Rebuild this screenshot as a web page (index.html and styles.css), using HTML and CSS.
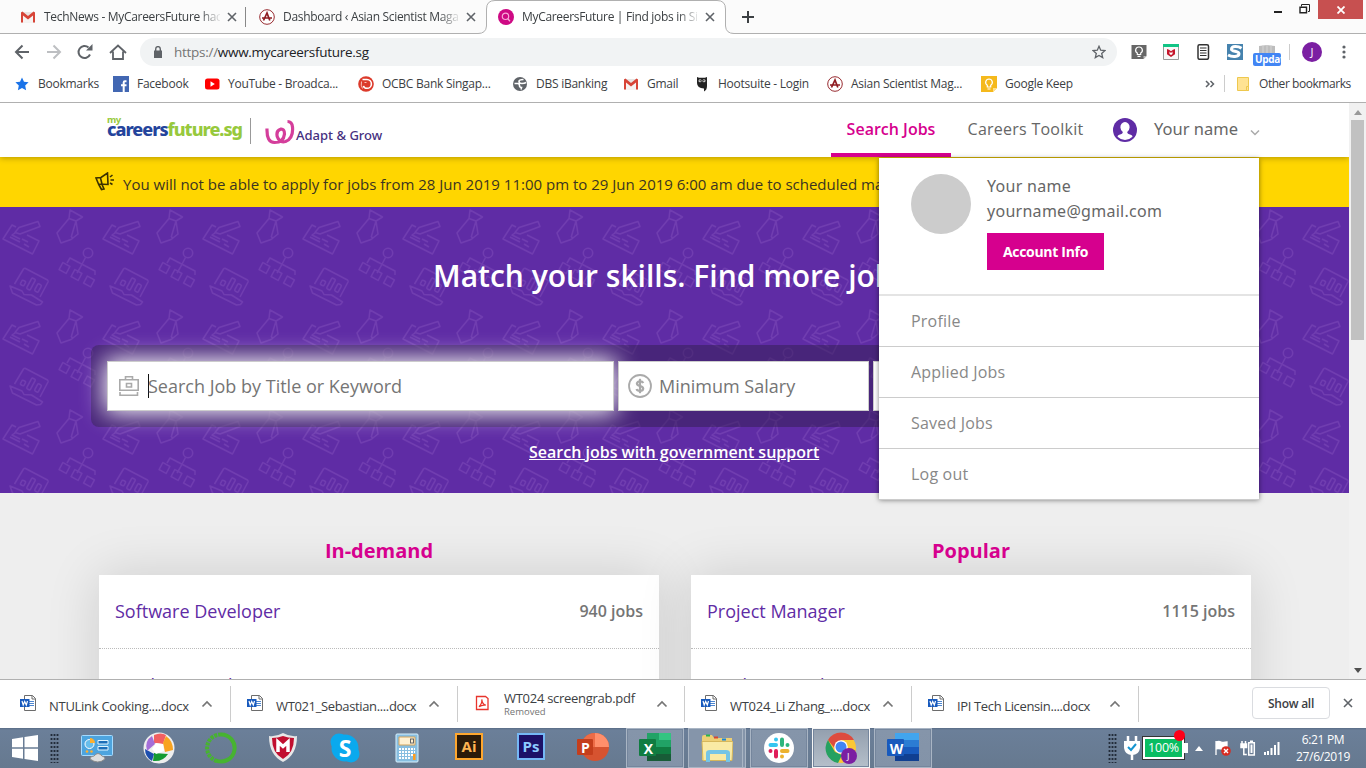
FILE: index.html
```html
<!DOCTYPE html>
<html lang="en">
<head>
<meta charset="utf-8">
<title>MyCareersFuture | Find jobs in Singapore</title>
<link rel="stylesheet" href="styles.css">
</head>
<body>
<svg class="defs" width="0" height="0" aria-hidden="true">
  <symbol id="gmail" viewBox="0 0 16 16"><path d="M1 3h14v10.500H1z" fill="#e8e4e2"/><path d="M3 5l5 4 5-4v8.500H3z" fill="#f6f3f2"/><path d="M1 3.400V13.500h2V6.500l5 4 5-4v7h2V3.400L13.600 2.500 8 7 2.400 2.500z" fill="#d74437"/></symbol>
  <symbol id="asian" viewBox="0 0 16 16"><circle cx="8" cy="8" r="7.300" fill="#fff" stroke="#982b30" stroke-width="1"/><path d="M4.500 11.500L8 4l2.800 7.500M3 9h10" fill="none" stroke="#8f1c22" stroke-width="1.700"/></symbol>
  <symbol id="x" viewBox="0 0 10 10"><path d="M1 1l8 8M9 1L1 9" stroke="#5f6368" stroke-width="1.600"/></symbol>
  <symbol id="up" viewBox="0 0 12 8"><path d="M1.500 6.500L6 2l4.500 4.500" fill="none" stroke="#757575" stroke-width="1.700"/></symbol>
  <symbol id="word" viewBox="0 0 16 16"><path d="M4.500.5h8l3 3v12h-11z" fill="#fff" stroke="#6c6c6c"/><path d="M12 .5v3.500h3.500" fill="none" stroke="#6c6c6c"/><path d="M9 6.500h5M9 8.500h5M9 10.500h5" stroke="#4d86d0"/><path d="M0 4h9.500v8H0z" fill="#185abd"/><path d="M2 6l1.200 4L4.700 6.500 6.300 10 7.500 6" fill="none" stroke="#fff" stroke-width="1.200"/></symbol>
</svg>

<div class="tabs">
  <div class="tab"><svg class="ico"><use href="#gmail"/></svg><span class="tab-name">TechNews - MyCareersFuture hackathon</span><svg class="close"><use href="#x"/></svg></div>
  <div class="tab second"><svg class="ico"><use href="#asian"/></svg><span class="tab-name">Dashboard ‹ Asian Scientist Magazine</span><svg class="close"><use href="#x"/></svg></div>
  <div class="tab active">
    <svg class="tab-shape" viewBox="0 0 256 34"><path d="M0 33.500Q8 33.500 8.500 26V9Q8.500.500 17 .500H239Q247.500.500 247.500 9V26Q248 33.500 256 33.500V34H0z" fill="#fff"/><path d="M0 33.500Q8 33.500 8.500 26V9Q8.500.500 17 .500H239Q247.500.500 247.500 9V26Q248 33.500 256 33.500" fill="none" stroke="#b0b0b0"/></svg>
    <svg class="ico" viewBox="0 0 16 16"><circle cx="8" cy="8" r="8" fill="#ce0a84"/><circle cx="7.500" cy="7.300" r="3.200" fill="none" stroke="#f9a8d8" stroke-width="1.200"/><path d="M9.800 9.800l2.200 2.400" stroke="#f9a8d8" stroke-width="1.300"/></svg>
    <span class="tab-name">MyCareersFuture | Find jobs in Singapore</span><svg class="close"><use href="#x"/></svg></div>
  <svg class="plus" viewBox="0 0 12 12"><path d="M6 0v12M0 6h12" stroke="#3c4043" stroke-width="2"/></svg>
  <div class="win">
    <svg class="min" viewBox="0 0 8 2"><path d="M0 0h8v2H0z" fill="#222"/></svg>
    <svg class="restore" viewBox="0 0 11 10"><path d="M2.500 2.500V.5h8v7H9" fill="none" stroke="#222"/><path d="M1 3.200h6.500v5.500H1z" fill="#fff" stroke="#222" stroke-width="1.400"/></svg>
    <span class="win-close"><svg viewBox="0 0 8 8"><path d="M.500.500l7 7M7.500.500l-7 7" stroke="#fff" stroke-width="1.800"/></svg></span>
  </div>
</div>

<div class="toolbar">
  <svg class="navs" viewBox="0 0 116 20" fill="none" stroke="#5f6368" stroke-width="2">
    <path d="M15 10H2M8.500 3.500L2 10l6.500 6.500"/><path d="M33 10h13M39.500 3.500L46 10l-6.500 6.500" stroke="#bdbfc2"/><path d="M76 12.500A6 6 0 1 1 74.500 5.500"/><path d="M78.500 2v6.500H72z" fill="#5f6368" stroke="none"/><path d="M96 11l8-7.500 8 7.500M99 9.500V17h10V9.500" stroke-width="1.800"/>
  </svg>
  <div class="omni">
    <svg class="lock" viewBox="0 0 8 12"><path d="M0 4.500h8V12H0z" fill="#5f6368"/><path d="M1.700 5V2.900a2.300 2.300 0 0 1 4.600 0V5" fill="none" stroke="#5f6368" stroke-width="1.400"/></svg>
    <span class="url"><i>https://</i>www.mycareersfuture.sg</span>
    <svg class="star" viewBox="0 0 14 14"><path d="M7 1.300l1.700 3.900 4.200.4-3.200 2.800 1 4.200L7 10.400l-3.700 2.200 1-4.200L1.100 5.600l4.200-.4z" fill="none" stroke="#5f6368" stroke-width="1.300"/></svg>
  </div>
  <div class="exts">
    <svg viewBox="0 0 16 16"><path d="M.500 1h15v11l-3 3H.500z" fill="#666"/><path d="M15.500 12h-3v3z" fill="#bbb"/><path d="M8 3a3.200 3.200 0 0 0-1.700 6v1.500h3.400V9A3.200 3.200 0 0 0 8 3zM6.500 12.300h3" fill="none" stroke="#fff" stroke-width="1.200"/></svg>
    <svg viewBox="0 0 16 16"><path d="M.500.500h15v15H.500z" fill="#f8f8f8" stroke="#999"/><path d="M0 0h16v3H0z" fill="#12c485"/><path d="M4 5l2 .8 2 1.400 2-1.400 2-.8v5.300L8 13l-4-2.700z" fill="#c5152b"/><path d="M6.500 7.500L8 9l1.500-1.500V10L8 11l-1.500-1z" fill="#fff"/></svg>
    <svg viewBox="0 0 16 16"><rect x="3" y=".8" width="10.500" height="14.500" rx="1.500" fill="#fff" stroke="#333" stroke-width="1.500"/><path d="M5 4h6.500M5 6.500h6.500M5 9h6.500M5 11.500h6.500" stroke="#333" stroke-width="1.200"/></svg>
    <svg viewBox="0 0 16 16"><path d="M0 0h16v16H0z" fill="#4683ae"/><path d="M14.500 4.300C11 2 4.500 1.800 4.500 5.200c0 2.600 7.500 1.600 7.500 4.600 0 3.400-7 3.500-11 1.200" fill="none" stroke="#fff" stroke-width="3"/></svg>
    <span class="upd"><svg viewBox="0 0 16 16"><path d="M0 2l8-1 8 1v9H0z" fill="#bdbdbd"/><path d="M4 1v9M8 1v9M12 1v9" stroke="#d5d5d5"/></svg><b>Updat</b></span>
  </div>
  <i class="bar"></i>
  <span class="user">J</span>
  <svg class="dots" viewBox="0 0 4 14" fill="#5f6368"><circle cx="2" cy="2" r="1.600"/><circle cx="2" cy="7" r="1.600"/><circle cx="2" cy="12" r="1.600"/></svg>
</div>

<div class="marks">
  <div class="mark"><svg viewBox="0 0 16 16"><path d="M8 1.500l2 4.300 4.600.5-3.400 3.200.9 4.800L8 12l-4.100 2.300.9-4.800L1.400 6.300 6 5.800z" fill="#1a73e8"/></svg>Bookmarks</div>
  <div class="mark"><svg viewBox="0 0 16 16"><path d="M0 0h16v16H0z" fill="#4267b2"/><path d="M13.500 5.200h-1.600q-1.200 0-1.200 1.200V16M8 9.300h5.500" fill="none" stroke="#fff" stroke-width="2"/></svg>Facebook</div>
  <div class="mark tight"><svg viewBox="0 0 16 16"><rect x="1" y="2.500" width="14.500" height="11" rx="2.500" fill="#f00"/><path d="M6.500 5.300v5.400L10.800 8z" fill="#fff"/></svg>YouTube - Broadca...</div>
  <div class="mark tight"><svg viewBox="0 0 16 16"><circle cx="8" cy="8" r="7.800" fill="#dc3a2b"/><path d="M4.500 3.500H9a4.300 4.300 0 0 1 0 8.800q-3 0-3.500-2.500" fill="none" stroke="#fff" stroke-width="1.600"/><path d="M6.500 6.500h2M3.500 5.500q-1 4 1 7" fill="none" stroke="#f7c4bd"/></svg>OCBC Bank Singap...</div>
  <div class="mark"><svg viewBox="0 0 16 16"><circle cx="8" cy="8" r="7" fill="#5f6368"/><path d="M11.500 3.500Q7 3.500 7 5.500T10 7.500q2.500 0 4-1M2.500 7.500h3q2 0 2 2t2 2l-.5 2" fill="none" stroke="#fff" stroke-width="1.600"/></svg>DBS iBanking</div>
  <div class="mark"><svg><use href="#gmail"/></svg>Gmail</div>
  <div class="mark"><svg viewBox="0 0 16 16"><path d="M3 1l2 .700h6l2-.700v9q0 4-3 5.500v-3Q3 12 3 7z" fill="#222"/><circle cx="6" cy="4.700" r="1.500" fill="#ddd"/><circle cx="10" cy="4.700" r="1.500" fill="#ddd"/><circle cx="6.200" cy="4.700" r=".7" fill="#222"/><circle cx="9.800" cy="4.700" r=".7" fill="#222"/></svg>Hootsuite - Login</div>
  <div class="mark tight"><svg><use href="#asian"/></svg>Asian Scientist Mag...</div>
  <div class="mark tight"><svg viewBox="0 0 16 16"><path d="M0 0h16v12l-4 4H0z" fill="#f5b91c"/><path d="M16 12h-4v4z" fill="#ffe08a"/><path d="M8 3a3.400 3.400 0 0 0-1.700 6.300V11h3.400V9.300A3.400 3.400 0 0 0 8 3zM6.500 13h3" fill="none" stroke="#fff" stroke-width="1.200"/></svg>Google Keep</div>
  <svg class="more" viewBox="0 0 10 8"><path d="M1 1l3 3-3 3M5.500 1l3 3-3 3" fill="none" stroke="#5f6368" stroke-width="1.500"/></svg>
  <div class="mark others"><svg viewBox="0 0 16 16"><path d="M2.500 1.500h11v13h-11z" fill="#ffe393" stroke="#eec84e"/><path d="M11.500 14.500v-4h2v4z" fill="#ffe393" stroke="#eec84e"/></svg>Other bookmarks</div>
</div>

<div class="view">
<main class="site">
  <header class="head">
    <div class="brand"><span class="my">my</span><span class="cf"><b>careers</b>future.sg</span></div>
    <div class="adapt"><svg viewBox="0 0 30 26"><path d="M2 9.500Q1.500 23.500 9.500 23.500 18.500 23.500 19.500 15 19.500 9.500 15.500 10.200 11 11.500 12.200 17.500 14.500 24 20.500 22.500 28.500 19.500 27.500 8 27 2.500 22.500 2.500" fill="none" stroke="#d43e9b" stroke-width="3.200"/></svg><span>Adapt &amp; Grow</span></div>
    <nav class="nav">
      <a class="on">Search Jobs</a><a class="tool">Careers Toolkit</a>
      <svg class="face" viewBox="0 0 24 24"><circle cx="12" cy="12" r="12" fill="#5f2ca5"/><path d="M12 4a4.600 5 0 0 0-4.600 5.500Q7.600 12.500 9.800 14q0 2-3.500 2.700-1.700.5-1.800 2Q8 22 12 22t7.500-3.300q0-1.500-1.800-2-3.500-.7-3.500-2.700 2.200-1.500 2.400-4.500A4.600 5 0 0 0 12 4z" fill="#fff"/></svg>
      <span class="name">Your name</span>
      <svg class="down" viewBox="0 0 10 7"><path d="M1 1.500l4 4 4-4" fill="none" stroke="#aaa" stroke-width="1.500"/></svg>
    </nav>
    <aside class="menu">
      <div class="profile"><span class="pic"></span>
        <div><p>Your name</p><p>yourname@gmail.com</p><button>Account Info</button></div></div>
      <a>Profile</a><a>Applied Jobs</a><a>Saved Jobs</a><a>Log out</a>
    </aside>
  </header>
  <div class="notice"><svg viewBox="0 0 20 20" fill="none" stroke="#3b3200" stroke-width="1.600"><path d="M1 6l2.500 6 9.500.500L12.500 1 6 5.500zM3.500 12l3 5.500 2.500-.5-2-4.500M5.500 6l1.500 6M15 5l2.500-2M15.500 8h3.500M15 11l2.500 1.500"/></svg><span>You will not be able to apply for jobs from 28 Jun 2019 11:00 pm to 29 Jun 2019 6:00 am due to scheduled maintenance</span></div>
  <section class="hero">
    <svg class="pattern"><defs><pattern id="work" width="100" height="100" patternUnits="userSpaceOnUse"><g fill="none" stroke="#703db0" stroke-width="1.500" stroke-linejoin="round">
      <path d="M16 20l-4-2-9 14 29.500 15L39 34l-12-6M38 14.500l2 5L20 27l-5-1.500 4-5zM15 26l-3 2 8 4M10 30l10 5M22 32l6 3M24 37l5 3"/>
      <path d="M70 3l12.500 7L76 14l-7-2.500zM69 11.500L57 26l4 10 10-3.500 7-5.500-2-13-4.500 15M71 29l2 3"/>
      <circle cx="88" cy="46" r="4.700"/><path d="M85.500 50.500L80 61M67 56l3-5 25 13v4M80 61l-3 5"/>
      <rect x="-4" y="-4" width="8" height="8" transform="translate(64.500 61) rotate(28)"/><rect x="-4" y="-4" width="8" height="8" transform="translate(76.500 68) rotate(28)"/><rect x="-4" y="-4" width="8" height="8" transform="translate(89 74.500) rotate(28)"/>
      <path d="M14.500 77l9-15q1-1 2-.500L47.500 73q1 1 .5 2L40 90M10 79l12 5 2 3.500 7.500.5 11 7-2 2.500-4 .5-24-12z"/>
      <rect x="-2" y="-2.500" width="4" height="5" rx="1" transform="translate(23 76) rotate(28)"/><rect x="-2" y="-6" width="4" height="12" rx="1" transform="translate(31 77) rotate(28)"/><rect x="-2" y="-4" width="4" height="8" rx="1" transform="translate(38 81) rotate(28)"/>
    </g></pattern></defs><rect width="100%" height="100%" fill="url(#work)"/></svg>
    <h1>Match your skills. Find more jobs for you</h1>
    <div class="search">
      <div class="field focus"><svg viewBox="0 0 20 20" fill="none" stroke="#aaa" stroke-width="1.600"><path d="M.800 3.800h18.400v10.400H.800zM6.500 3.500V.800h7v2.700M7.500 7.500h5v3.500h-5zM1 16v3.200h17.500V16"/></svg><span class="caret"></span><span>Search Job by Title or Keyword</span></div>
      <div class="field salary"><svg viewBox="0 0 24 24"><circle cx="12" cy="12" r="11" fill="none" stroke="#aaa" stroke-width="1.800"/><path d="M15.300 9Q14.500 7.300 12 7.300T8.900 9.400Q9 11.300 12 12t3.200 2.600Q15 16.800 12 16.800T8.600 15" fill="none" stroke="#aaa" stroke-width="2.200"/><path d="M12 4.800v14.400" stroke="#aaa" stroke-width="2.200"/></svg><span>Minimum Salary</span></div>
      <div class="field last"></div>
    </div>
    <a class="gov">Search jobs with government support</a>
  </section>
  <section class="lists">
    <div class="col"><h2>In-demand</h2><div class="card"><div class="row"><span>Software Developer</span><b>940 jobs</b></div><div class="row"><span>Product Developer</span><b>640 jobs</b></div></div></div>
    <div class="col"><h2>Popular</h2><div class="card"><div class="row"><span>Project Manager</span><b>1115 jobs</b></div><div class="row"><span>Product Developer</span><b>640 jobs</b></div></div></div>
  </section>
</main>
<div class="scroll"><svg viewBox="0 0 8 5"><path d="M0 5l4-5 4 5z" fill="#999"/></svg><span class="thumb"></span><svg viewBox="0 0 8 5"><path d="M0 0l4 5 4-5z" fill="#505050"/></svg></div>
</div>

<div class="downs">
  <div class="dl"><svg class="ico"><use href="#word"/></svg><span>NTULink Cooking....docx</span><svg class="chev"><use href="#up"/></svg></div>
  <div class="dl"><svg class="ico"><use href="#word"/></svg><span class="tighter">WT021_Sebastian....docx</span><svg class="chev"><use href="#up"/></svg></div>
  <div class="dl pdf"><svg class="ico" viewBox="0 0 16 16"><path d="M2.500 1.500h9l2.500 2v11H2.500z" fill="#fff" stroke="#e8342c" stroke-width="1.300"/><path d="M5 11.800Q8.500 8 7.800 4.500 8 9 11.800 10.200 8 9.500 5 11.800z" fill="none" stroke="#e8342c" stroke-width="1.300"/></svg><span>WT024 screengrab.pdf<small>Removed</small></span><svg class="chev"><use href="#up"/></svg></div>
  <div class="dl"><svg class="ico"><use href="#word"/></svg><span>WT024_Li Zhang_....docx</span><svg class="chev"><use href="#up"/></svg></div>
  <div class="dl"><svg class="ico"><use href="#word"/></svg><span class="tighter">IPI Tech Licensin....docx</span><svg class="chev"><use href="#up"/></svg></div>
  <button class="showall">Show all</button><svg class="dclose"><use href="#x"/></svg>
</div>

<div class="task">
  <svg class="start" viewBox="0 0 26 26" fill="#fff"><path d="M0 4l11-1.700v10H0zM12.500 2L26 0v12.300H12.500zM0 13.700h11v10L0 22zM12.500 13.700H26V26l-13.500-2z"/></svg>
  <i class="grip"></i>
  <div class="apps">
    <div class="app"><svg viewBox="0 0 32 32"><rect x=".5" y="3.500" width="31" height="20" rx="1" fill="#4da4de" stroke="#a5dbff"/><circle cx="8.500" cy="12" r="4.500" fill="#67bdeb" stroke="#fff"/><path d="M9 11V6a5 5 0 0 1 5 5z" fill="#ffb02e"/><path d="M17 8.500h10v3.500H17zM17 14.500h10v3.500H17z" fill="#1d6fb8" stroke="#e1f5ff"/><circle cx="6" cy="19.500" r="1.300" fill="#ffb02e"/><circle cx="10.500" cy="19.500" r="1.300" fill="#ffb02e"/><path d="M9 27q0-3 4-3 4-5 8 0 3 .5 3 3-7 6-15 0z" fill="#dedede" stroke="#8e8e8e"/></svg></div>
    <div class="app"><svg viewBox="0 0 32 32"><circle cx="16" cy="16" r="15.500" fill="#eee"/><path d="M11 3q7-3 12 0l-3 9-9-1z" fill="#f25f62"/><path d="M23 4q7 5 7 14l-8 2-2-9z" fill="#f8a320"/><path d="M11 21l14 1q-5 8-15 7z" fill="#159b32"/><path d="M2 17l9 5-2 7Q2 25 2 17z" fill="#1d4fae"/><path d="M9 4l3 8-8 7Q1 9 9 4z" fill="#a46ed8"/><path d="M13 11l7 1 1 7-8 3-4-5z" fill="#fff"/></svg></div>
    <div class="app"><svg viewBox="0 0 32 32" fill="none" stroke="#47b331"><path d="M16 2.500a13.500 13.500 0 1 1-5 26" stroke-width="4"/><path d="M12 29A13.500 13.500 0 0 1 16 2.500" stroke-width="4" stroke-dasharray="3 1"/></svg></div>
    <div class="app"><svg viewBox="0 0 32 32"><path d="M2 4Q9 5 16 1q7 4 14 3 0 19-14 26Q2 23 2 4z" fill="#e8e8e8"/><path d="M5 6q6 0 11-2 5 2 11 2 0 15-11 21Q5 21 5 6z" fill="#c10f2f"/><path d="M11 20V10l5 4.500 5-4.500v10" fill="none" stroke="#fff" stroke-width="3.500"/></svg></div>
    <div class="app"><svg viewBox="0 0 32 32" fill="#0aa9ee"><circle cx="16" cy="16" r="13.500"/><circle cx="10" cy="10" r="8.500"/><circle cx="22" cy="22" r="8.500"/></svg><b class="sk">S</b></div>
    <div class="app"><svg viewBox="0 0 32 32"><rect x="5" y="2" width="22" height="28" rx="1" fill="#87bee0" stroke="#d9f2ff"/><path d="M8 5h16v8H8z" fill="#fff1d2" stroke="#d4a45d"/><rect x="19.500" y="7" width="3" height="4" fill="none" stroke="#666"/><g stroke="#fff" stroke-width="2" stroke-dasharray="2 1"><path d="M8 17h16M8 20h16M8 23h16M8 26h12"/></g><path d="M22 22h2.500v6H22z" fill="#ff9d1c"/></svg></div>
    <div class="app"><b class="adobe ai">Ai</b></div>
    <div class="app"><b class="adobe ps">Ps</b></div>
    <div class="app"><svg viewBox="0 0 32 32"><circle cx="18" cy="15" r="14" fill="#d65330"/><path d="M18 1A14 14 0 0 1 32 15H18z" fill="#ff8f6b"/><path d="M18 1v14H4A14 14 0 0 1 18 1z" fill="#ed6c47"/><rect y="7" width="16" height="16" rx="1" fill="#c43e1c"/></svg><b class="of">P</b></div>
    <div class="app open"><svg viewBox="0 0 32 32"><path d="M8 1h12v28H8z" fill="#21a366"/><path d="M20 1h12v7H20z" fill="#33c481"/><path d="M20 8h12v7H20z" fill="#21a366"/><path d="M8 15h24v14H8z" fill="#107c41"/><path d="M8 22h24v7H8z" fill="#185c37"/><rect y="7" width="17" height="17" rx="1" fill="#107c41"/></svg><b class="of">X</b></div>
    <div class="app open stack"><svg viewBox="0 0 32 32"><path d="M1 5q0-2 2-2h8l2 3h18v22H1z" fill="#edcf74"/><path d="M5 3.500h4" stroke="#2ab24c" stroke-width="2"/><path d="M13 5.500h4" stroke="#d74732" stroke-width="2"/><path d="M21 7.500h4" stroke="#1687dc" stroke-width="2"/><path d="M1 9.500h31l-1 19H2z" fill="#f9eaa5" stroke="#d6b75b"/><path d="M7 30V21q0-1 2-1h16q2 0 2 1v9" fill="none" stroke="#75c5e6" stroke-width="4"/></svg></div>
    <div class="app open"><svg viewBox="0 0 32 32"><circle cx="16" cy="16" r="15" fill="#fff"/><g fill="none" stroke-width="4" stroke-linecap="round"><path d="M13 7.500h0M7.500 13H13" stroke="#36c5f0"/><path d="M19 7.500V13M24.500 13h0" stroke="#2eb67d"/><path d="M19 19h5.500M19 24.500h0" stroke="#ecb22e"/><path d="M13 19v5.500M7.500 19h0" stroke="#e01e5a"/></g></svg></div>
    <div class="app open now"><svg viewBox="0 0 32 32"><circle cx="16" cy="16" r="15" fill="#fbc734"/><path d="M3 8A15 15 0 0 1 29 8H16l-5 10z" fill="#dd4b3e"/><path d="M3 8l7 12 7 3-4 8A15 15 0 0 1 3 8z" fill="#25a161"/><circle cx="16" cy="15" r="6.800" fill="#fff"/><circle cx="16" cy="15" r="5.500" fill="#4285f4"/><circle cx="24" cy="24" r="8" fill="#7b1fa2"/></svg><b class="jj">J</b></div>
    <div class="app open"><svg viewBox="0 0 32 32"><path d="M8 1h24v7H8z" fill="#41a5ee"/><path d="M8 8h24v7H8z" fill="#2b7cd3"/><path d="M8 15h24v7H8z" fill="#185abd"/><path d="M8 22h24v7H8z" fill="#103f91"/><rect y="7" width="17" height="17" rx="1" fill="#185abd"/></svg><b class="of">W</b></div>
  </div>
  <div class="tray">
    <i class="grip"></i>
    <svg class="plug" viewBox="0 0 16 24"><path d="M4 0v6M12 0v6M8 18v6" stroke="#fff" stroke-width="2.500"/><path d="M0 5h16v7q-1 7-8 7T0 12z" fill="#fff"/><path d="M4 11l3 3 5-6" fill="none" stroke="#1694cf" stroke-width="2"/></svg>
    <span class="batt">100%</span>
    <svg class="tri" viewBox="0 0 8 5"><path d="M0 5l4-5 4 5z" fill="#fff"/></svg>
    <svg class="flag" viewBox="0 0 16 16"><path d="M1 1v14M1 2q3-1 5 0t6 0v7q-3 1-6 0T1 9z" fill="#fff" stroke="#fff" stroke-width="1.300"/><circle cx="11" cy="11" r="4.800" fill="#d82c22"/><path d="M9 9l4 4M13 9l-4 4" stroke="#fff" stroke-width="1.400"/></svg>
    <svg class="pow" viewBox="0 0 16 16" fill="none" stroke="#fff" stroke-width="1.500"><path d="M8.700 2.700h5.600V15H8.700zM10 1.200h3M2 1v3M5.500 1v3M3.800 8v6.500h3"/><path d="M1 4h5.500v3.500H1z" fill="#fff"/><path d="M10.500 4.500h2v8.500h-2z" fill="#fff" stroke="none"/></svg>
    <svg class="sig" viewBox="0 0 16 13" fill="#fff"><path d="M0 10h2v3H0zM3 9h2v4H3zM6.500 6h2v7h-2zM10 3h2v10h-2zM13.500 0h2v13h-2z"/></svg>
    <div class="clock"><span>6:21 PM</span><span>27/6/2019</span></div>
  </div>
</div>
</body>
</html>
```
FILE: styles.css
```css
*{box-sizing:border-box}
body{margin:0;width:1366px;height:768px;overflow:hidden;display:flex;flex-direction:column;font-family:"Open Sans",sans-serif;font-size:12px;color:#3c4043;background:#fff}
svg{display:block;flex:none}
p,h1,h2{margin:0}
.defs{position:absolute}
.ico{width:16px;height:16px}

/* browser tabs */
.tabs{height:34px;flex:none;display:flex;align-items:center;background:#fbfbfb;border-bottom:1px solid #b0b0b0;position:relative}
.tab{display:flex;align-items:center;width:247px;height:33px;padding-left:20px;border-right:1px solid transparent;background:linear-gradient(#888,#888) right 7px/1px 20px no-repeat}
.tab.second{width:239px;padding-left:12px;background:none}
.tab.active{width:240px;padding-left:12px;position:relative;background:none}
.tab-shape{position:absolute;left:-8px;top:0;width:256px;height:34px}
.tab .ico,.tab-name,.close{position:relative}
.tab-name{width:176px;margin-left:8px;white-space:nowrap;overflow:hidden;letter-spacing:-.32px;-webkit-mask-image:linear-gradient(90deg,#000 156px,transparent 178px);mask-image:linear-gradient(90deg,#000 156px,transparent 178px)}
.close{width:10px;height:10px;margin-left:7px}
.plus{width:12px;height:12px;margin-left:16px}
.win{margin-left:auto;height:33px;display:flex;align-items:flex-start;padding-right:3px}
.min{width:8px;height:2px;margin:11px 17px 0 0}
.restore{width:11px;height:10px;margin:4px 8px 0 0}
.win-close{width:45px;height:19px;background:#c75050;display:flex;align-items:center;justify-content:center}
.win-close svg{width:8px;height:8px}

/* address bar */
.toolbar{height:35px;flex:none;display:flex;align-items:center;padding-left:14px;padding-top:1px}
.navs{width:116px;height:20px}
.omni{margin-left:10px;width:977px;height:28px;border-radius:14px;background:#f1f3f4;display:flex;align-items:center;padding-left:14px}
.lock{width:8px;height:12px}
.url{margin-left:12px;font-size:13.500px;letter-spacing:-.28px;color:#202124}
.url i{font-style:normal;color:#757575}
.star{width:14px;height:14px;margin:0 11px 0 auto}
.exts{display:flex;gap:16px;margin-left:14px}
.exts svg{width:16px;height:16px}
.upd{position:relative}
.upd b{position:absolute;left:-6px;top:9px;width:28px;height:13px;border-radius:2px;background:#4285f4;color:#fff;font-size:10px;line-height:13px;padding-left:2px;overflow:hidden;letter-spacing:-.3px}
.bar{width:1px;height:16px;background:#ccc;margin-left:14px}
.user{width:20px;height:20px;border-radius:50%;background:#7b1fa2;color:#fff;text-align:center;line-height:20px;font-size:11px;margin-left:12px}
.dots{width:4px;height:14px;margin-left:20px}

/* bookmarks bar */
.marks{height:34px;flex:none;border-bottom:1px solid #b0b0b0;padding-left:14px;padding-bottom:4px;display:grid;grid-template-columns:99px 91px 154px 154px 111px 71px 133px 154px 224px 29px 1fr;align-items:center}
.mark{display:flex;align-items:center;gap:8px;white-space:nowrap;letter-spacing:-.25px}
.mark.tight{letter-spacing:-.26px}
.mark svg{width:16px;height:16px}
.more{width:10px;height:8px}
.mark.others{border-left:1px solid #ccc;margin-left:-10px;padding-left:10px;letter-spacing:-.45px}

/* page */
.view{height:576px;flex:none;display:flex}
.site{width:1349px;overflow:hidden;background:#eee}
.head{position:relative;z-index:3;height:54px;background:#fff;display:flex;padding-left:107px;box-shadow:0 1px 6px rgba(0,0,0,.3)}
.brand{width:144px;height:26px;margin-top:15px;border-right:1px solid #999;font-family:"Noto Sans",sans-serif;display:flex;flex-direction:column}
.my{color:#97c93d;font-weight:700;font-size:9.500px;line-height:4px;letter-spacing:-.4px}
.cf{color:#97c93d;font-weight:800;font-size:18px;line-height:14px;letter-spacing:-1px}
.cf b{color:#24449c;font-weight:800}
.adapt{display:flex;margin-left:14px;padding-top:16px;color:#46307f}
.adapt svg{width:30px;height:26px}
.adapt span{margin-left:1px;padding-top:7px;font-family:"Noto Sans",sans-serif;font-weight:500;font-size:13px}
.nav{position:absolute;left:831px;top:0;height:54px;display:flex;align-items:center;font-size:16px;font-weight:500;color:#666}
.nav a{height:54px;line-height:52px;width:120px;text-align:center}
.nav .on{color:#d6008e;font-weight:600;border-bottom:4px solid #d6008e}
.nav .tool{width:149px;letter-spacing:.25px}
.face{width:24px;height:24px;margin-left:13px}
.name{margin:-3px 0 0 17px;width:84px;font-family:"Noto Sans",sans-serif;font-weight:400;font-size:16.500px;white-space:nowrap}
.down{width:10px;height:7px;margin:4px 0 0 12px}
.menu{position:absolute;left:879px;top:55px;width:380px;height:341px;background:#fff;box-shadow:0 1px 5px rgba(0,0,0,.5);color:#888;font-size:16px;font-weight:500;letter-spacing:.2px}
.profile{display:flex;height:138px;padding:16px 0 0 32px;border-bottom:2px solid #e4e4e4;color:#666;font-weight:400;font-family:"Noto Sans",sans-serif}
.pic{width:60px;height:60px;border-radius:50%;background:#ccc;margin-right:16px}
.profile p{line-height:25px;letter-spacing:.28px}
.profile button{display:block;width:117px;height:37px;margin-top:9px;padding:0;border:0;background:#d6008e;color:#fff;font:700 14px "Open Sans",sans-serif;letter-spacing:-.3px}
.menu a{display:block;height:51px;padding-left:32px;line-height:50px;border-bottom:1px solid #ccc}
.notice{position:relative;height:50px;background:#ffd600;display:flex;align-items:center;padding-left:95px;font-size:15px;color:#3b3420;white-space:nowrap}
.notice svg{width:20px;height:20px;margin-right:8px}
.notice span{padding-top:4px}
.hero{position:relative;height:286px;background:#5f2ca5;display:flex;flex-direction:column}
.pattern{position:absolute;width:100%;height:100%}
.hero h1{position:relative;margin:49px 0 0 433px;font-size:30px;line-height:40px;font-weight:600;color:#fff;white-space:nowrap}
.search{position:relative;margin:49px 0 0 91px;width:1168px;height:82px;border-radius:8px;background:rgba(50,30,80,.5);padding:16px;display:flex;gap:4px}
.field{height:50px;background:#fff;border:1px solid #ccc;display:flex;align-items:center;color:#757575;font-size:18px}
.focus{width:507px;padding-left:11px;box-shadow:0 0 25px 2px #fff}
.focus svg{width:20px;height:20px}
.caret{width:1px;height:24px;background:#111;margin:0 -1px 0 9px}
.salary{width:251px;padding-left:9px;position:relative}
.salary svg{width:24px;height:24px;margin-right:7px}
.last{flex:1}
.gov{position:relative;margin:12px 0 0 529px;line-height:26px;color:#fff;font-size:16px;font-weight:600;text-decoration:underline}
.lists{display:flex;gap:32px;padding:43px 0 0 99px}
.col{width:560px;flex:none}
.col h2{font-size:20px;line-height:30px;height:39px;font-weight:700;color:#d6008e;text-align:center}
.card{height:300px;background:#fff;box-shadow:0 0 50px rgba(0,0,0,.14)}
.row{height:74px;padding:0 16px 2px;display:flex;align-items:center;justify-content:space-between;border-bottom:1px dotted #bbb;font-size:18px;color:#5f2ca5}
.row b{font-size:16px;font-weight:600;color:#757575}
.scroll{width:17px;background:#f1f1f1;display:flex;flex-direction:column;align-items:center;padding:7px 0 6px}
.scroll svg{width:8px;height:5px}
.thumb{width:13px;height:220px;margin:5px 0 auto;background:#c1c1c1}

/* downloads */
.downs{height:49px;flex:none;border-top:1px solid #b0b0b0;display:flex;padding-left:4px;font-size:13px}
.dl{width:227px;height:48px;display:flex;align-items:center;padding-left:16px;background:linear-gradient(#ccc,#ccc) right 6px/1px 36px no-repeat}
.dl .ico{margin:-2px 13px 0 0}
.dl span{width:152px;padding-top:4px;white-space:nowrap;letter-spacing:-.28px}
.dl .tighter{letter-spacing:-.36px}
.dl.pdf span{line-height:15px;padding-top:1px;margin-left:1px}
.dl small{display:block;font-size:9.500px;line-height:12px;color:#757575;letter-spacing:0}
.chev{width:12px;height:8px}
.showall{width:78px;height:32px;margin:7px 0 0 113px;border:1px solid #dadce0;border-radius:4px;background:#fff;color:#3c4043;font:600 12px "Open Sans",sans-serif;letter-spacing:-.25px;padding:0}
.dclose{width:10px;height:10px;margin:18px 0 0 13px}

/* taskbar */
.task{height:40px;flex:none;display:flex;align-items:center;background:linear-gradient(#596c86,#6b7f99 2px,#66798f);padding-left:12px}
.start{width:26px;height:26px;margin-right:12px}
.grip{width:9px;height:30px;background:radial-gradient(circle,#222c3a 1px,transparent 1.200px) 0 0/3px 4px}
.apps{display:flex;margin-left:7px}
.app{width:58px;height:40px;margin:0 2px;display:flex;align-items:center;justify-content:center;position:relative}
.app svg{width:32px;height:32px}
.open{border:1px solid #a9b5c4;background:linear-gradient(#8595aa,#8393a8);box-shadow:inset 0 0 0 1px #75869d}
.stack{box-shadow:none;background:linear-gradient(90deg,#8595aa 53px,#a9b5c4 53px,#a9b5c4 54px,#8595aa 54px)}
.now{background:linear-gradient(#939fae,#b5bfca);border-color:#f5f5f5}
.app b{position:absolute;color:#fff}
.of{left:13px;top:10px;width:17px;text-align:center;font-size:14px;line-height:19px}
.sk{font-size:23px;line-height:30px}
.app .jj{font-size:9px;font-weight:400;left:34px;top:21px}
.app .adobe{width:28px;height:27px;top:5px;border:2px solid #ffa72e;background:#2c1b09;color:#ffb452;text-align:center;font-size:15px;line-height:22px}
.app .ps{border-color:#75b8f5;background:#1c1167;color:#8bcbff}
.tray{margin-left:auto;display:flex;align-items:center}
.plug{width:16px;height:24px;margin-left:7px}
.batt{position:relative;width:41px;height:22px;margin-left:3px;border:2px solid #fff;outline:1px solid #333;background:#09bd62;color:#fff;font-size:12.500px;line-height:18px;text-align:center;letter-spacing:-.2px}
.batt::before{content:"";position:absolute;right:-6px;top:4px;width:4px;height:10px;background:#fff}
.batt::after{content:"";position:absolute;right:-3px;top:-9px;width:11px;height:11px;border-radius:50%;background:#ff0018}
.tri{width:8px;height:5px;margin-left:11px}
.flag{width:16px;height:16px;margin-left:12px}
.pow{width:16px;height:16px;margin-left:9px}
.sig{width:16px;height:13px;margin-left:8px}
.clock{width:86px;display:flex;flex-direction:column;text-align:center;color:#fff;font-size:12px;line-height:17px;letter-spacing:-.32px}
```
